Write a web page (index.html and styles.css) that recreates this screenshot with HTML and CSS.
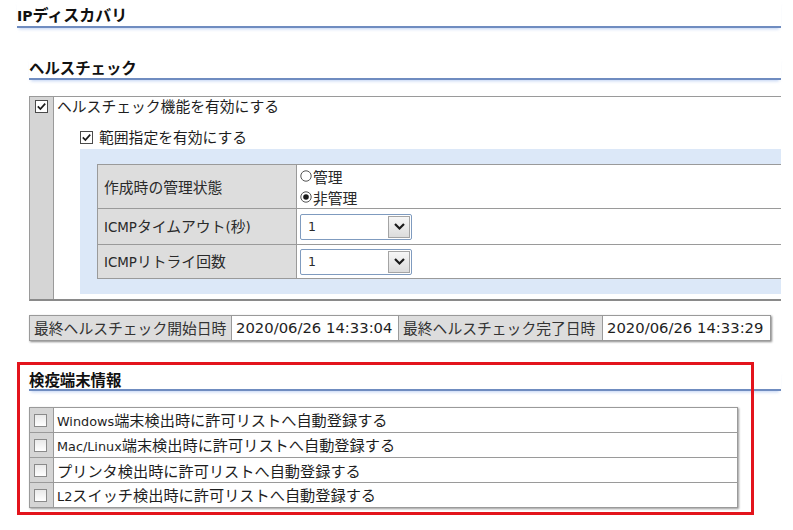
FILE: index.html
```html
<!DOCTYPE html>
<html lang="ja">
<head>
<meta charset="utf-8">
<title>IPディスカバリ</title>
<link rel="stylesheet" href="styles.css">
</head>
<body>
<div class="page">
  <h1 class="title"><span class="lat-b">IP</span>ディスカバリ</h1>

  <section class="sec">
    <h2 class="sec-h">ヘルスチェック</h2>
    <div class="panel">
      <div class="panel-side">
        <svg class="cb" width="13" height="13" viewBox="0 0 13 13"><rect x="0.5" y="0.5" width="12" height="12" fill="#fff" stroke="#4a4a4a"/><path d="M2.8 6.4 L5.4 9 L10.2 3.6" fill="none" stroke="#1a1a1a" stroke-width="1.7"/></svg>
      </div>
      <div class="panel-main">
        <div class="row1">ヘルスチェック機能を有効にする</div>
        <div class="row2">
          <svg class="cb" width="13" height="13" viewBox="0 0 13 13"><rect x="0.5" y="0.5" width="12" height="12" fill="#fff" stroke="#4a4a4a"/><path d="M2.8 6.4 L5.4 9 L10.2 3.6" fill="none" stroke="#1a1a1a" stroke-width="1.7"/></svg>
          <span>範囲指定を有効にする</span>
        </div>
        <div class="blue">
          <table class="grid">
            <tr class="r1">
              <td class="lab">作成時の管理状態</td>
              <td class="val radios">
                <div class="radio"><svg width="12" height="12" viewBox="0 0 12 12"><circle cx="6" cy="6" r="5.2" fill="#fff" stroke="#555"/></svg>管理</div>
                <div class="radio"><svg width="12" height="12" viewBox="0 0 12 12"><circle cx="6" cy="6" r="5.2" fill="#fff" stroke="#555"/><circle cx="6" cy="6" r="2.8" fill="#1a1a1a"/></svg>非管理</div>
              </td>
            </tr>
            <tr class="r2">
              <td class="lab"><span class="lat-l">ICMP</span>タイムアウト<span class="lat-l">(</span>秒<span class="lat-l">)</span></td>
              <td class="val">
                <div class="sel"><span class="sel-v">1</span><span class="sel-b"><svg width="13" height="9" viewBox="0 0 13 9"><path d="M2 2 L6.5 6.5 L11 2" fill="none" stroke="#1a1a1a" stroke-width="2.2"/></svg></span></div>
              </td>
            </tr>
            <tr class="r3">
              <td class="lab"><span class="lat-l">ICMP</span>リトライ回数</td>
              <td class="val">
                <div class="sel"><span class="sel-v">1</span><span class="sel-b"><svg width="13" height="9" viewBox="0 0 13 9"><path d="M2 2 L6.5 6.5 L11 2" fill="none" stroke="#1a1a1a" stroke-width="2.2"/></svg></span></div>
              </td>
            </tr>
          </table>
        </div>
      </div>
    </div>

    <table class="dates">
      <tr>
        <td class="d-lab d1">最終ヘルスチェック開始日時</td>
        <td class="d-val d2">2020/06/26 14:33:04</td>
        <td class="d-lab d3">最終ヘルスチェック完了日時</td>
        <td class="d-val d4">2020/06/26 14:33:29</td>
      </tr>
    </table>
  </section>

  <section class="sec sec-q">
    <h2 class="sec-h">検疫端末情報</h2>
    <table class="checks">
      <tr><td class="c-side"><span class="ucb"></span></td><td class="c-txt"><span class="lat">Windows</span>端末検出時に許可リストへ自動登録する</td></tr>
      <tr><td class="c-side"><span class="ucb"></span></td><td class="c-txt"><span class="lat">Mac/Linux</span>端末検出時に許可リストへ自動登録する</td></tr>
      <tr><td class="c-side"><span class="ucb"></span></td><td class="c-txt">プリンタ検出時に許可リストへ自動登録する</td></tr>
      <tr><td class="c-side"><span class="ucb"></span></td><td class="c-txt"><span class="lat">L2</span>スイッチ検出時に許可リストへ自動登録する</td></tr>
    </table>
  </section>

  <div class="redbox"></div>
</div>
</body>
</html>
```

FILE: styles.css
```css
* { box-sizing: border-box; }

body {
  margin: 0;
  background: #fff;
  color: #1e1e1e;
  font-family: "Noto Sans CJK JP", "DejaVu Sans", sans-serif;
  font-size: 14.8px;
}

.page {
  position: relative;
  width: 793px;
  height: 530px;
  overflow: hidden;
  padding: 0 12px 0 17px;
}

.lat { font-family: "DejaVu Sans", sans-serif; font-size: 12.8px; }
.lat-b { font-family: "DejaVu Sans", sans-serif; font-size: 14px; font-weight: 700; }
.lat-l { font-family: "DejaVu Sans", sans-serif; font-size: 13.4px; }

.title {
  margin: 0;
  padding-top: 4px;
  line-height: 20px;
  font-size: 16px;
  font-weight: 700;
  color: #111;
  border-bottom: 2px solid #6f8cc0;
  box-shadow: 0 3px 3px -2px rgba(150, 180, 235, 0.6);
}

.sec { margin-left: 12px; }

.sec-h {
  margin: 29px 0 0;
  font-size: 15.4px;
  font-weight: 700;
  line-height: 20px;
  padding-bottom: 1px;
  color: #111;
  border-bottom: 2px solid #6f8cc0;
  box-shadow: 0 3px 3px -2px rgba(150, 180, 235, 0.6);
}

/* ヘルスチェック panel */
.panel {
  margin-top: 16px;
  display: flex;
  border: 1px solid #9a9a9a;
  border-right: none;
  border-bottom: 2px solid #8a8a8a;
}

.panel-side {
  width: 24px;
  background: #d5d5d5;
  border-right: 1px solid #9a9a9a;
  padding: 3px 0 0 5px;
}

.cb { display: block; flex: none; }

.panel-main {
  flex: 1;
  padding-bottom: 5px;
}

.row1 {
  height: 18px;
  line-height: 18px;
  padding-left: 3px;
}

.row2 {
  margin-top: 12px;
  height: 20px;
  line-height: 20px;
  padding-left: 26px;
  display: flex;
  align-items: center;
  gap: 6px;
}

.blue {
  margin: 2px 0 0 26px;
  background: #dce8f8;
  padding: 15px 0 15px 17px;
}

.grid {
  width: 100%;
  border-collapse: collapse;
  background: #fff;
  color: #2a2a2a;
  line-height: 20px;
}

.grid td {
  border-top: 1px solid #9a9a9a;
  border-bottom: 1px solid #9a9a9a;
  padding: 0;
}

.grid .lab {
  width: 199px;
  background: #dddddd;
  border-left: 1px solid #9a9a9a;
  border-right: 1px solid #9a9a9a;
  padding-left: 6px;
}

.grid .r1 { height: 44px; }
.grid .r2 { height: 36px; }
.grid .r3 { height: 34px; }

.radios { padding: 0 0 0 3px !important; }

.radio {
  display: flex;
  align-items: center;
  gap: 1px;
  height: 21px;
  line-height: 21px;
}

.sel {
  margin-left: 3px;
  width: 112px;
  height: 26px;
  display: flex;
  border: 1px solid #7f9bbf;
  border-radius: 2px;
  background: #fff;
}

.sel-v {
  flex: 1;
  padding-left: 7px;
  line-height: 24px;
  font-family: "DejaVu Sans", sans-serif;
  font-size: 12.5px;
}

.sel-b {
  width: 22px;
  margin: 1px;
  display: flex;
  align-items: center;
  justify-content: center;
  background: linear-gradient(#f6f6f6, #dcdcdc);
  border: 1px solid #a4a4a4;
}

/* dates */
.dates {
  margin-top: 14px;
  border-collapse: collapse;
  box-shadow: 1px 1px 2px #888;
  line-height: 20px;
}

.dates td {
  height: 25px;
  border: 1px solid #9a9a9a;
  padding: 0 0 0 4px;
  white-space: nowrap;
}

.d-lab { background: #dddddd; color: #333; }
.d-val {
  background: #fff;
  font-family: "DejaVu Sans", sans-serif;
  font-size: 14.8px;
  padding-left: 4px !important;
}

.d1 { width: 202px; }
.d2 { width: 167px; }
.d3 { width: 204px; }
.d4 { width: 168px; }

/* 検疫端末情報 */
.sec-q .sec-h { margin-top: 29px; line-height: 18px; }

.checks {
  margin-top: 16px;
  width: 709px;
  border-collapse: collapse;
  box-shadow: 1px 1px 2px #999;
  font-size: 15.2px;
  line-height: 20px;
}

.checks td {
  height: 25px;
  border: 1px solid #9a9a9a;
  padding: 0;
}

.c-side {
  width: 24px;
  background: #d5d5d5;
  padding-left: 4px !important;
}

.ucb {
  display: block;
  width: 13px;
  height: 13px;
  border: 1px solid #8a8a8a;
  background: linear-gradient(#e9e9e9, #ffffff);
}

.c-txt {
  padding-left: 3px !important;
  background: #fff;
}

.redbox {
  position: absolute;
  left: 17px;
  top: 362px;
  width: 737px;
  height: 153px;
  border: 3px solid #e3141c;
}
```
